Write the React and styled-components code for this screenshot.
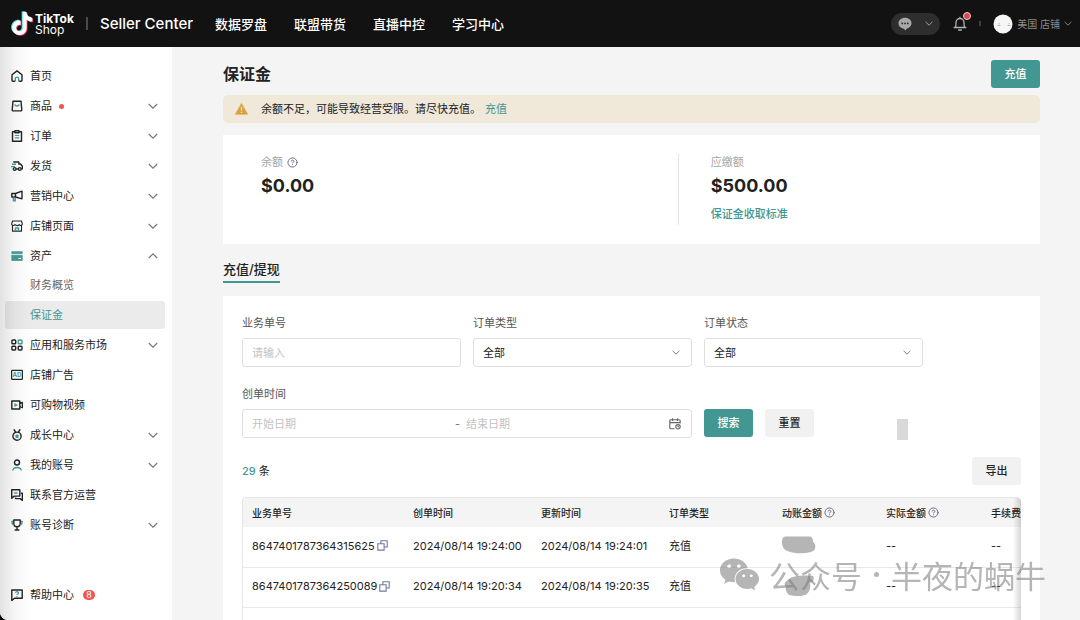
import React, { useState } from "react";
import styled, { createGlobalStyle, css } from "styled-components";
import { CircleHelp } from "lucide-react";
import { FaWeixin } from "react-icons/fa";

const teal = "#429793";
const ink = "#222222";

const GlobalStyle = createGlobalStyle`
  * {
    box-sizing: border-box;
  }
  body {
    margin: 0;
    background-color: #000;
  }
  body, button, input, select {
    font-family: Inter, "Noto Sans CJK SC", sans-serif;
    font-size: 11px;
    line-height: 16px;
    color: ${ink};
  }
  a {
    color: inherit;
    text-decoration: none;
  }
  button {
    padding: 0;
    border: 0;
    background: none;
    cursor: pointer;
  }
  svg {
    display: block;
    flex: none;
  }
`;

const Page = styled.div`
  display: flex;
  flex-direction: column;
  height: 100vh;
  overflow: hidden;
  background-color: #f4f4f4;
  border-bottom-left-radius: 8px;
`;

const Header = styled.header`
  display: flex;
  align-items: center;
  flex: none;
  height: 47px;
  padding: 0 8px 0 11px;
  background-color: #121212;
  color: #fff;
`;

const Brand = styled.a`
  display: flex;
  align-items: center;
  gap: 2px;
`;

const BrandName = styled.span`
  display: block;
  font-size: 12px;
  line-height: 11px;
  font-weight: ${props => (props.$bold ? 700 : 400)};
`;

const BrandDivider = styled.span`
  width: 2px;
  height: 13px;
  margin: 0 12px;
  background-color: #4a4a4a;
`;

const SiteName = styled.span`
  font-size: 15px;
  line-height: 20px;
  font-weight: 500;
`;

const TopNav = styled.nav`
  display: flex;
  gap: 27px;
  margin-left: 22px;
  font-size: 13px;
  font-weight: 500;
  line-height: 20px;
`;

const HeaderTools = styled.div`
  display: flex;
  align-items: center;
  margin-left: auto;
`;

const ChatButton = styled.button`
  display: flex;
  align-items: center;
  justify-content: space-between;
  width: 49px;
  height: 22px;
  padding: 0 7px;
  border-radius: 11px;
  background-color: #2e2e2e;
`;

const BellButton = styled.button`
  position: relative;
  margin-left: 13px;
`;

const BellDot = styled.span`
  position: absolute;
  top: -4px;
  right: -4px;
  width: 8px;
  height: 8px;
  border: 1px solid #f3c9c9;
  border-radius: 50%;
  background-color: #d8474d;
`;

const SmallDivider = styled.span`
  width: 2px;
  height: 5px;
  margin: 0 12px;
  background-color: #3b3d47;
`;

const Account = styled.button`
  display: flex;
  align-items: center;
  gap: 4px;
  color: #8a8a8a;
  font-size: 10px;
`;

const Body = styled.div`
  display: flex;
  flex: 1;
  min-height: 0;
`;

const Sidebar = styled.nav`
  flex: none;
  width: 172px;
  padding-top: 14px;
  background: linear-gradient(to right, #e2e2e2, #f7f7f7 16px, #fff 32px);
`;

const MenuList = styled.ul`
  margin: 0;
  padding: 0;
  list-style: none;
`;

const itemStyle = css`
  display: flex;
  align-items: center;
  gap: 7px;
  width: 100%;
  height: 30px;
  padding: 0 14px 0 11px;
`;

const MenuLink = styled.a`
  ${itemStyle}
`;

const MenuButton = styled.button`
  ${itemStyle}
`;

const MenuArrow = styled.span`
  margin-left: auto;
`;

const SubMenu = styled.ul`
  display: flex;
  flex-direction: column;
  gap: 2px;
  margin: 0 7px 0 5px;
  padding: 0 0 1px;
  list-style: none;
`;

const SubLink = styled.a`
  display: flex;
  align-items: center;
  height: 28px;
  padding-left: 25px;
  border-radius: 3px;
  color: ${props => (props.$active ? teal : "#666")};
  background-color: ${props => (props.$active ? "rgba(0, 0, 0, 0.08)" : "transparent")};
`;

const HelpLink = styled(MenuLink)`
  margin-top: 40px;
`;

const RedDot = styled.span`
  width: 5px;
  height: 5px;
  border-radius: 50%;
  background-color: #f0554f;
`;

const Badge = styled.span`
  min-width: 12px;
  height: 10px;
  margin-left: 2px;
  border-radius: 5px;
  background-color: #f0554f;
  color: #fff;
  font-size: 9px;
  line-height: 10px;
  text-align: center;
`;

const Main = styled.main`
  display: flex;
  flex-direction: column;
  flex: 1;
  min-width: 0;
  padding: 13px 40px 0 51px;
`;

const TitleRow = styled.div`
  display: flex;
  align-items: center;
  justify-content: space-between;
`;

const Title = styled.h1`
  margin: 0;
  font-size: 16px;
  font-weight: 600;
  line-height: 24px;
`;

const Button = styled.button`
  flex: none;
  width: 49px;
  height: 28px;
  border-radius: 3px;
  font-weight: 500;
  color: ${props => (props.$primary ? "#fff" : ink)};
  background-color: ${props => (props.$primary ? teal : "#f1f1f1")};
`;

const Notice = styled.div`
  display: flex;
  align-items: center;
  height: 28px;
  margin-top: 7px;
  padding: 0 12px;
  border-radius: 5px;
  background-color: #f0e8d9;
`;

const NoticeText = styled.span`
  margin: 0 4px 0 13px;
`;

const TextLink = styled.a`
  color: ${teal};
  font-weight: ${props => (props.$strong ? 500 : 400)};
`;

const Summary = styled.section`
  display: grid;
  grid-template-columns: 9fr 7fr;
  margin-top: 12px;
  padding: 19px 38px;
  background-color: #fff;
`;

const Amount = styled.div`
  display: flex;
  flex-direction: column;
  align-items: flex-start;
  min-height: 71px;
  padding-left: ${props => (props.$divided ? "32px" : "0")};
  border-left: ${props => (props.$divided ? "1px solid #e6e6e6" : "0")};
`;

const AmountLabel = styled.span`
  display: flex;
  align-items: center;
  gap: 4px;
  color: #a6a6a6;
`;

const AmountValue = styled.strong`
  margin: 4px 0 8px;
  font-size: 18px;
  font-weight: 700;
  line-height: 24px;
`;

const HelpIcon = styled(CircleHelp)`
  color: #62657f;
`;

const Tabs = styled.div`
  display: flex;
  margin-top: 16px;
`;

const Tab = styled.button`
  padding-bottom: 3px;
  border-bottom: 2px solid ${teal};
  font-size: 13px;
  font-weight: 500;
  line-height: 18px;
`;

const Panel = styled.section`
  display: flex;
  flex-direction: column;
  flex: 1;
  min-height: 0;
  margin-top: 13px;
  padding: 19px 19px 0;
  background-color: #fff;
`;

const Form = styled.form`
  display: grid;
  grid-template-columns: repeat(3, 1fr);
  gap: 19px 12px;
  padding-right: 98px;
`;

const Field = styled.div`
  display: flex;
  flex-direction: column;
  gap: 7px;
  grid-column: span ${props => props.$span || 1};
`;

const Label = styled.label`
  color: #555;
`;

const controlStyle = css`
  width: 100%;
  height: 29px;
  border: 1px solid #dfdfdf;
  border-radius: 3px;
  background-color: #fff;
`;

const inputStyle = css`
  outline: none;
  &::placeholder {
    color: #c2c2c2;
    opacity: 1;
  }
`;

const Input = styled.input`
  ${controlStyle}
  ${inputStyle}
  padding: 0 9px;
`;

const SelectBox = styled.div`
  position: relative;
`;

const Select = styled.select`
  ${controlStyle}
  display: block;
  padding: 0 9px;
  appearance: none;
`;

const SelectArrow = styled.span`
  position: absolute;
  top: 12px;
  right: 12px;
  pointer-events: none;
`;

const DateRange = styled.div`
  ${controlStyle}
  display: flex;
  align-items: center;
  padding: 0 10px 0 9px;
  color: #777;
`;

const DateInput = styled.input`
  ${inputStyle}
  flex: 1;
  min-width: 0;
  padding: 0;
  border: 0;
  background: none;
`;

const Dash = styled.span`
  margin-right: 6px;
`;

const Actions = styled.div`
  display: flex;
  align-items: flex-start;
  gap: 12px;
  padding-top: 23px;
`;

const GreyMark = styled.span`
  width: 11px;
  height: 21px;
  margin: 10px 15px 0 auto;
  background-color: #d9d9d9;
`;

const CountRow = styled.div`
  display: flex;
  align-items: center;
  justify-content: space-between;
  margin-top: 17px;
`;

const Count = styled.span`
  color: ${teal};
  font-weight: 500;
`;

const TableBox = styled.div`
  position: relative;
  flex: 1;
  min-height: 0;
  margin-top: 12px;
  overflow: hidden;
  border: 1px solid #e6e6e6;
  border-bottom: 0;
  border-right: 0;
  border-radius: 4px 4px 0 0;
  &::after {
    content: "";
    position: absolute;
    top: 0;
    right: 0;
    bottom: 0;
    width: 8px;
    background: linear-gradient(to right, rgba(0, 0, 0, 0), rgba(0, 0, 0, 0.16));
  }
`;

const Table = styled.table`
  width: 860px;
  min-width: 110%;
  table-layout: fixed;
  border-collapse: collapse;
`;

const Col = styled.col`
  width: ${props => props.$width}px;
`;

const Th = styled.th`
  height: 29px;
  padding: 0 0 0 9px;
  background-color: #f4f4f4;
  font-size: 10px;
  font-weight: 500;
  text-align: left;
  white-space: nowrap;
`;

const Td = styled.td`
  height: 40px;
  padding: 0 0 2px 9px;
  border-bottom: 1px solid #e8e8e8;
  white-space: nowrap;
`;

const Inline = styled.span`
  display: flex;
  align-items: center;
  gap: 2px;
`;

const Watermark = styled.div`
  position: fixed;
  right: 34px;
  bottom: 25px;
  display: flex;
  align-items: center;
  gap: 9px;
  color: #787878;
  font-family: "Noto Sans CJK SC", sans-serif;
  font-size: 31px;
  line-height: 40px;
  opacity: 0.55;
  pointer-events: none;
`;

const WatermarkText = styled.span`
  display: flex;
  align-items: center;
  gap: 12px;
`;

const WatermarkDot = styled.span`
  width: 5px;
  height: 5px;
  border-radius: 50%;
  background-color: currentColor;
`;

const NOTE_PATH =
  "M12.525.02c1.31-.02 2.61-.01 3.91-.02.08 1.53.63 3.09 1.75 4.17 1.12 1.11 2.7 1.62 4.24 1.79v4.03c-1.44-.05-2.89-.35-4.2-.97-.57-.26-1.1-.59-1.62-.93-.01 2.92.01 5.84-.02 8.75-.08 1.4-.54 2.79-1.35 3.94-1.31 1.92-3.58 3.17-5.91 3.21-1.43.08-2.86-.31-4.08-1.03-2.02-1.19-3.44-3.37-3.65-5.71-.02-.5-.03-1-.01-1.49.18-1.9 1.12-3.72 2.58-4.96 1.66-1.44 3.98-2.13 6.15-1.72.02 1.48-.04 2.96-.04 4.44-.99-.32-2.15-.23-3.02.37-.63.41-1.11 1.04-1.36 1.75-.21.51-.15 1.07-.14 1.61.24 1.64 1.82 3.02 3.5 2.87 1.12-.01 2.19-.66 2.77-1.61.19-.33.4-.67.41-1.06.1-1.79.06-3.57.07-5.36.01-4.03-.01-8.05.02-12.07z";

const Logo = () => (
  <svg width="22" height="25" viewBox="0.5 -1 22.5 26">
    <path d={NOTE_PATH} fill="#4fe3df" transform="translate(-1.1 -0.8)" />
    <path d={NOTE_PATH} fill="#ee3a5b" transform="translate(0.9 0.8)" />
    <path d={NOTE_PATH} fill="#fff" />
  </svg>
);

const Chevron = ({ up, color = "#777", size = 10 }) => (
  <svg width={size} height={size / 2 + 1} viewBox="0 0 10 6" fill="none" stroke={color} strokeWidth="1.2">
    <path d={up ? "M.8 5 5 .9 9.2 5" : "M.8 1 5 5.1 9.2 1"} />
  </svg>
);

const ChatIcon = () => (
  <svg width="14" height="14" viewBox="0 0 14 14">
    <path d="M7 .8c3.7 0 6.5 2.4 6.5 5.5 0 2.9-2.3 4.9-4.8 5.4l-1.3 1.9-1.5-1.9C2.9 11.3.5 9.2.5 6.3.5 3.2 3.3.8 7 .8z" fill="#a8a8a8" />
    <circle cx="4.2" cy="6.4" r=".9" fill="#2e2e2e" />
    <circle cx="7" cy="6.4" r=".9" fill="#2e2e2e" />
    <circle cx="9.8" cy="6.4" r=".9" fill="#2e2e2e" />
  </svg>
);

const BellIcon = () => (
  <svg width="14" height="15" viewBox="0 0 14 15" fill="none" stroke="#b4b4b4" strokeWidth="1.3">
    <path d="M.6 11.5h12.8M2.4 11.5C3 10.5 3 9 3 6.5a4 4 0 0 1 8 0c0 2.5 0 4 .6 5M7 2.5V.8M5.2 14h3.6" />
  </svg>
);

const Avatar = () => (
  <svg width="20" height="20" viewBox="0 0 20 20">
    <circle cx="10" cy="10" r="9.5" fill="#f6f6f6" />
    <path d="M4.5 11.5h3M14.5 11.5h3M5.5 9.8H7M15.5 9.8H17" stroke="#b9b9b9" />
  </svg>
);

const WarnIcon = () => (
  <svg width="13" height="12" viewBox="0 0 13 12">
    <path d="M6.5.5 12.6 11.2H.4z" fill="#dba03c" stroke="#dba03c" strokeWidth=".6" strokeLinejoin="round" />
    <path d="M6.5 4v3.6M6.5 8.7v1.2" stroke="#f6ecd8" strokeWidth="1.2" />
  </svg>
);

const CalendarIcon = () => (
  <svg width="12" height="12" viewBox="0 0 12 12" fill="none" stroke="#666" strokeWidth="1.1">
    <path d="M5.5 10.8H1.8a1 1 0 0 1-1-1V2.7a1 1 0 0 1 1-1h8.4a1 1 0 0 1 1 1v2.8M.8 4.6h10.4M3.5.3v2.6M8.5.3v2.6" />
    <circle cx="9" cy="8.8" r="2.2" />
    <path d="M9 7.6v1.3h1.2" strokeWidth=".9" />
  </svg>
);

const CopyIcon = () => (
  <svg width="11" height="11" viewBox="0 0 11 11" fill="none" stroke="#7079a0" strokeWidth="1.1">
    <path d="M3.9 3.6V.8h6.3V7h-3M.8 3.8h6.3v6.3H.8z" />
  </svg>
);

const MenuIcon = ({ children }) => (
  <svg width="12" height="12" viewBox="0 0 12 12" fill="none" stroke={ink} strokeWidth="1.4" strokeLinejoin="round">
    {children}
  </svg>
);

const icons = {
  home: (
    <>
      <path d="M4 11.2H2a1 1 0 0 1-1-1V4.8L6 .9l5 3.9v5.4a1 1 0 0 1-1 1H8" />
      <path d="M4.3 11.4V8.8a1.7 1.7 0 0 1 3.4 0v2.6" stroke={teal} />
    </>
  ),
  goods: (
    <>
      <path d="M2 1.2h8l.8 8.6a1 1 0 0 1-1 1.1H2.2a1 1 0 0 1-1-1.1z" />
      <path d="M3.8 4.3c.4 2.3 4 2.3 4.4 0" stroke={teal} />
    </>
  ),
  order: (
    <>
      <path d="M3.8 1.8H1.5v9.4h9V1.8H8.2M4 .8h4v2H4z" />
      <path d="M3.8 5.5h4.4M3.8 7.9h4.4" stroke={teal} strokeWidth="1.1" />
    </>
  ),
  ship: (
    <>
      <path d="M2.3 2h5.5v2h1.8l1.8 2.2v2.6h-1M7.2 9H5.2" />
      <circle cx="3.7" cy="9" r="1.4" />
      <circle cx="8.8" cy="9" r="1.4" />
      <path d="M1 4.3h4M0 6.6h4" stroke={teal} />
    </>
  ),
  market: (
    <>
      <path d="M.8 3.5h3.7L11 1.2v7.6L4.5 7H.8zM4.5 3.5V7" />
      <path d="M2.4 7.6v3.3h1.8V8" stroke={teal} />
    </>
  ),
  shop: (
    <>
      <path d="M1.5 5.4v5.7h9V5.4M.8 3.4 1.5 1h9l.7 2.4v1.2c-1 1.3-2.3 1-2.9 0-.9 1.3-3.1 1.3-4.3 0-.9 1.2-2.3 1.2-3.2 0z" strokeWidth="1.1" />
      <path d="M4.5 11.2V8h3v3.2" stroke={teal} />
    </>
  ),
  assets: (
    <>
      <path d="M.8 1.7h10.4v1.8H.8zM.8 5.2h10.4v5.3H.8z" fill={teal} stroke={teal} strokeWidth=".8" />
      <path d="M7.5 8.5H10" stroke="#fff" strokeWidth="1.2" />
    </>
  ),
  apps: (
    <>
      <rect x=".9" y="1" width="3.8" height="3.8" rx=".9" />
      <rect x=".9" y="7.2" width="3.8" height="3.8" rx=".9" />
      <rect x="7.2" y="7.2" width="3.8" height="3.8" rx=".9" />
      <rect x="7.2" y="1" width="3.8" height="3.8" rx=".9" stroke={teal} />
    </>
  ),
  ads: (
    <>
      <rect x=".6" y="1.3" width="10.8" height="9" rx=".6" strokeWidth="1.2" />
      <text x="6" y="8" textAnchor="middle" fontSize="6" fontWeight="700" fill={teal} stroke="none">AD</text>
    </>
  ),
  video: (
    <>
      <path d="M.8 2h8v8h-8zM8.8 4.6l2.6-1.2v5.2L8.8 7.4" />
      <path d="M3.4 3.9 7 6 3.4 8.1z" fill={teal} stroke="none" />
    </>
  ),
  growth: (
    <>
      <circle cx="6" cy="7.2" r="4.1" />
      <path d="M2.8.3 4.6 3M9.2.3 7.4 3" />
      <path d="m6 4.6.8 1.7 1.8.2-1.3 1.3.3 1.8L6 8.8l-1.6.8.3-1.8-1.3-1.3 1.8-.2z" fill={teal} stroke="none" />
    </>
  ),
  user: (
    <>
      <circle cx="6" cy="3.5" r="2.5" />
      <path d="M1.8 11.5c.6-4 7.8-4 8.4 0" stroke={teal} />
    </>
  ),
  contact: (
    <>
      <path d="M.7.8h8.1v6.3H3.2L.7 9.2z" />
      <path d="M10 4.2h1.4v7.2L9.2 9.6H4.6V8.5" />
      <path d="M2.8 4h3.8" stroke={teal} />
    </>
  ),
  trophy: (
    <>
      <path d="M2.8 1h6.4v3.5c0 4.3-6.4 4.3-6.4 0zM6 7.8v3M3.6 11h4.8" />
      <path d="M2 2.5H.8c0 1.8.5 2.9 1.7 3.4M10 2.5h1.2c0 1.8-.5 2.9-1.7 3.4" stroke={teal} />
    </>
  ),
  help: (
    <>
      <path d="M.8 1h10.4v8.2H3.5L.8 11.5z" />
      <path d="M4.5 4c.1-1.8 3-1.7 3-.1 0 1-1.5 1.1-1.5 2.2M6 7v1" stroke={teal} strokeWidth="1.2" />
    </>
  )
};

const menu = [
  { icon: "home", text: "首页" },
  { icon: "goods", text: "商品", arrow: true, dot: true },
  { icon: "order", text: "订单", arrow: true },
  { icon: "ship", text: "发货", arrow: true },
  { icon: "market", text: "营销中心", arrow: true },
  { icon: "shop", text: "店铺页面", arrow: true },
  { icon: "assets", text: "资产", arrow: true, children: ["财务概览", "保证金"] },
  { icon: "apps", text: "应用和服务市场", arrow: true },
  { icon: "ads", text: "店铺广告" },
  { icon: "video", text: "可购物视频" },
  { icon: "growth", text: "成长中心", arrow: true },
  { icon: "user", text: "我的账号", arrow: true },
  { icon: "contact", text: "联系官方运营" },
  { icon: "trophy", text: "账号诊断", arrow: true }
];

const columns = [
  { text: "业务单号", width: 161 },
  { text: "创单时间", width: 128 },
  { text: "更新时间", width: 128 },
  { text: "订单类型", width: 113 },
  { text: "动账金额", width: 104, help: true },
  { text: "实际金额", width: 105, help: true },
  { text: "手续费", width: 121 }
];

const rows = [
  {
    id: "8647401787364315625",
    created: "2024/08/14 19:24:00",
    updated: "2024/08/14 19:24:01",
    mask: "M4 1.5h23c3 0 4 2 4 5 3 3 3 6 1 9-4 3-19 4-25 1-5-1-7-5-7-9 0-4 1-6 4-6z"
  },
  {
    id: "8647401787364250089",
    created: "2024/08/14 19:20:34",
    updated: "2024/08/14 19:20:35",
    mask: "M6 5c4-5 18-5 25-4 2 3 0 6-3 7 1 4 0 8-3 11-4 3-14 2-18 1-3-3-4-6-3-8-2-2-2-5 2-7z"
  }
];

const SideMenu = () => {
  const [open, setOpen] = useState(true);
  return (
    <Sidebar>
      <MenuList>
        {menu.map(item => {
          const content = (
            <>
              <MenuIcon>{icons[item.icon]}</MenuIcon>
              {item.text}
              {item.dot && <RedDot />}
              {item.arrow && <MenuArrow><Chevron up={item.children && open} /></MenuArrow>}
            </>
          );
          return (
            <li key={item.text}>
              {item.arrow
                ? <MenuButton type="button" onClick={item.children && (() => setOpen(!open))}>{content}</MenuButton>
                : <MenuLink href="#">{content}</MenuLink>}
              {item.children && open && (
                <SubMenu>
                  {item.children.map(text => (
                    <li key={text}><SubLink href="#" $active={text === "保证金"}>{text}</SubLink></li>
                  ))}
                </SubMenu>
              )}
            </li>
          );
        })}
      </MenuList>
      <HelpLink href="#">
        <MenuIcon>{icons.help}</MenuIcon>
        帮助中心
        <Badge>8</Badge>
      </HelpLink>
    </Sidebar>
  );
};

const SelectField = ({ id, label }) => (
  <Field>
    <Label htmlFor={id}>{label}</Label>
    <SelectBox>
      <Select id={id} defaultValue="all">
        <option value="all">全部</option>
      </Select>
      <SelectArrow><Chevron size={8} /></SelectArrow>
    </SelectBox>
  </Field>
);

const OrderTable = () => (
  <TableBox>
    <Table>
      <colgroup>
        {columns.map(col => <Col key={col.text} $width={col.width} />)}
      </colgroup>
      <thead>
        <tr>
          {columns.map(col => (
            <Th key={col.text} scope="col">
              <Inline>{col.text}{col.help && <HelpIcon size={11} />}</Inline>
            </Th>
          ))}
        </tr>
      </thead>
      <tbody>
        {rows.map(row => (
          <tr key={row.id}>
            <Td><Inline>{row.id}<button type="button" aria-label="复制"><CopyIcon /></button></Inline></Td>
            <Td>{row.created}</Td>
            <Td>{row.updated}</Td>
            <Td>充值</Td>
            <Td>
              <svg width="34" height="22" viewBox="0 0 34 22"><path d={row.mask} fill="#b5b5b5" /></svg>
            </Td>
            <Td>--</Td>
            <Td>--</Td>
          </tr>
        ))}
      </tbody>
    </Table>
  </TableBox>
);

export default function App() {
  const [orderNo, setOrderNo] = useState("");

  return (
    <Page>
      <GlobalStyle />
      <Header>
        <Brand href="#">
          <Logo />
          <span>
            <BrandName $bold>TikTok</BrandName>
            <BrandName>Shop</BrandName>
          </span>
        </Brand>
        <BrandDivider />
        <SiteName>Seller Center</SiteName>
        <TopNav>
          <a href="#">数据罗盘</a>
          <a href="#">联盟带货</a>
          <a href="#">直播中控</a>
          <a href="#">学习中心</a>
        </TopNav>
        <HeaderTools>
          <ChatButton type="button" aria-label="消息">
            <ChatIcon />
            <Chevron color="#a0a0a0" size={8} />
          </ChatButton>
          <BellButton type="button" aria-label="通知">
            <BellIcon />
            <BellDot />
          </BellButton>
          <SmallDivider />
          <Account type="button">
            <Avatar />
            美国 店铺
            <Chevron color="#8a8a8a" size={8} />
          </Account>
        </HeaderTools>
      </Header>
      <Body>
        <SideMenu />
        <Main>
          <TitleRow>
            <Title>保证金</Title>
            <Button type="button" $primary>充值</Button>
          </TitleRow>
          <Notice>
            <WarnIcon />
            <NoticeText>余额不足，可能导致经营受限。请尽快充值。</NoticeText>
            <TextLink href="#">充值</TextLink>
          </Notice>
          <Summary>
            <Amount>
              <AmountLabel>余额<HelpIcon size={11} /></AmountLabel>
              <AmountValue>$0.00</AmountValue>
            </Amount>
            <Amount $divided>
              <AmountLabel>应缴额</AmountLabel>
              <AmountValue>$500.00</AmountValue>
              <TextLink href="#" $strong>保证金收取标准</TextLink>
            </Amount>
          </Summary>
          <Tabs>
            <Tab type="button">充值/提现</Tab>
          </Tabs>
          <Panel>
            <Form onSubmit={event => event.preventDefault()}>
              <Field>
                <Label htmlFor="orderNo">业务单号</Label>
                <Input id="orderNo" placeholder="请输入" value={orderNo} onChange={event => setOrderNo(event.target.value)} />
              </Field>
              <SelectField id="orderType" label="订单类型" />
              <SelectField id="orderStatus" label="订单状态" />
              <Field $span={2}>
                <Label htmlFor="startDate">创单时间</Label>
                <DateRange>
                  <DateInput id="startDate" placeholder="开始日期" />
                  <Dash>-</Dash>
                  <DateInput aria-label="结束日期" placeholder="结束日期" />
                  <CalendarIcon />
                </DateRange>
              </Field>
              <Actions>
                <Button type="submit" $primary>搜索</Button>
                <Button type="reset" onClick={() => setOrderNo("")}>重置</Button>
                <GreyMark />
              </Actions>
            </Form>
            <CountRow>
              <span><Count>29</Count> 条</span>
              <Button type="button">导出</Button>
            </CountRow>
            <OrderTable />
          </Panel>
        </Main>
      </Body>
      <Watermark>
        <FaWeixin size={41} />
        <WatermarkText>公众号<WatermarkDot />半夜的蜗牛</WatermarkText>
      </Watermark>
    </Page>
  );
}
